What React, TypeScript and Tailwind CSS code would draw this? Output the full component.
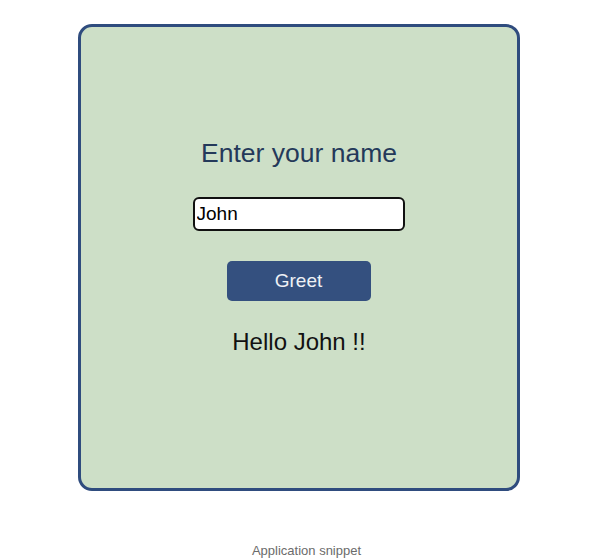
import { useState } from "react";

export default function App() {
  const [name, setName] = useState("John");
  const [greeting, setGreeting] = useState("John");

  return (
    <div className="min-h-[560px] w-[612px] bg-white font-['Liberation_Sans',Arial,sans-serif]">
      <div className="pt-[24px] pl-[78px]">
        <div className="flex h-[467px] w-[442px] flex-col items-center rounded-[14px] border-[3px] border-[#2f4c7e] bg-[#cddfc7] pt-[111px]">
          <h1 className="text-[26.5px] leading-[30px] text-[#24395a]">Enter your name</h1>
          <input
            value={name}
            onChange={(e) => setName(e.target.value)}
            className="mt-[29px] mr-[1px] h-[34px] w-[212px] rounded-[6px] border-2 border-[#111] bg-white px-[2px] text-[19px] text-black outline-none"
          />
          <button
            onClick={() => setGreeting(name)}
            className="mt-[30px] mr-[1px] h-[40px] w-[144px] rounded-[5px] bg-[#34507f] text-[19px] text-[#eef1f5]"
          >
            Greet
          </button>
          <p className="mt-[27px] text-[24px] leading-[28px] text-[#111]">Hello {greeting} !!</p>
        </div>
      </div>
      <p className="mt-[52px] pl-[1px] text-center text-[13px] leading-[16px] text-[#6b6b6b]">
        Application snippet
      </p>
    </div>
  );
}
